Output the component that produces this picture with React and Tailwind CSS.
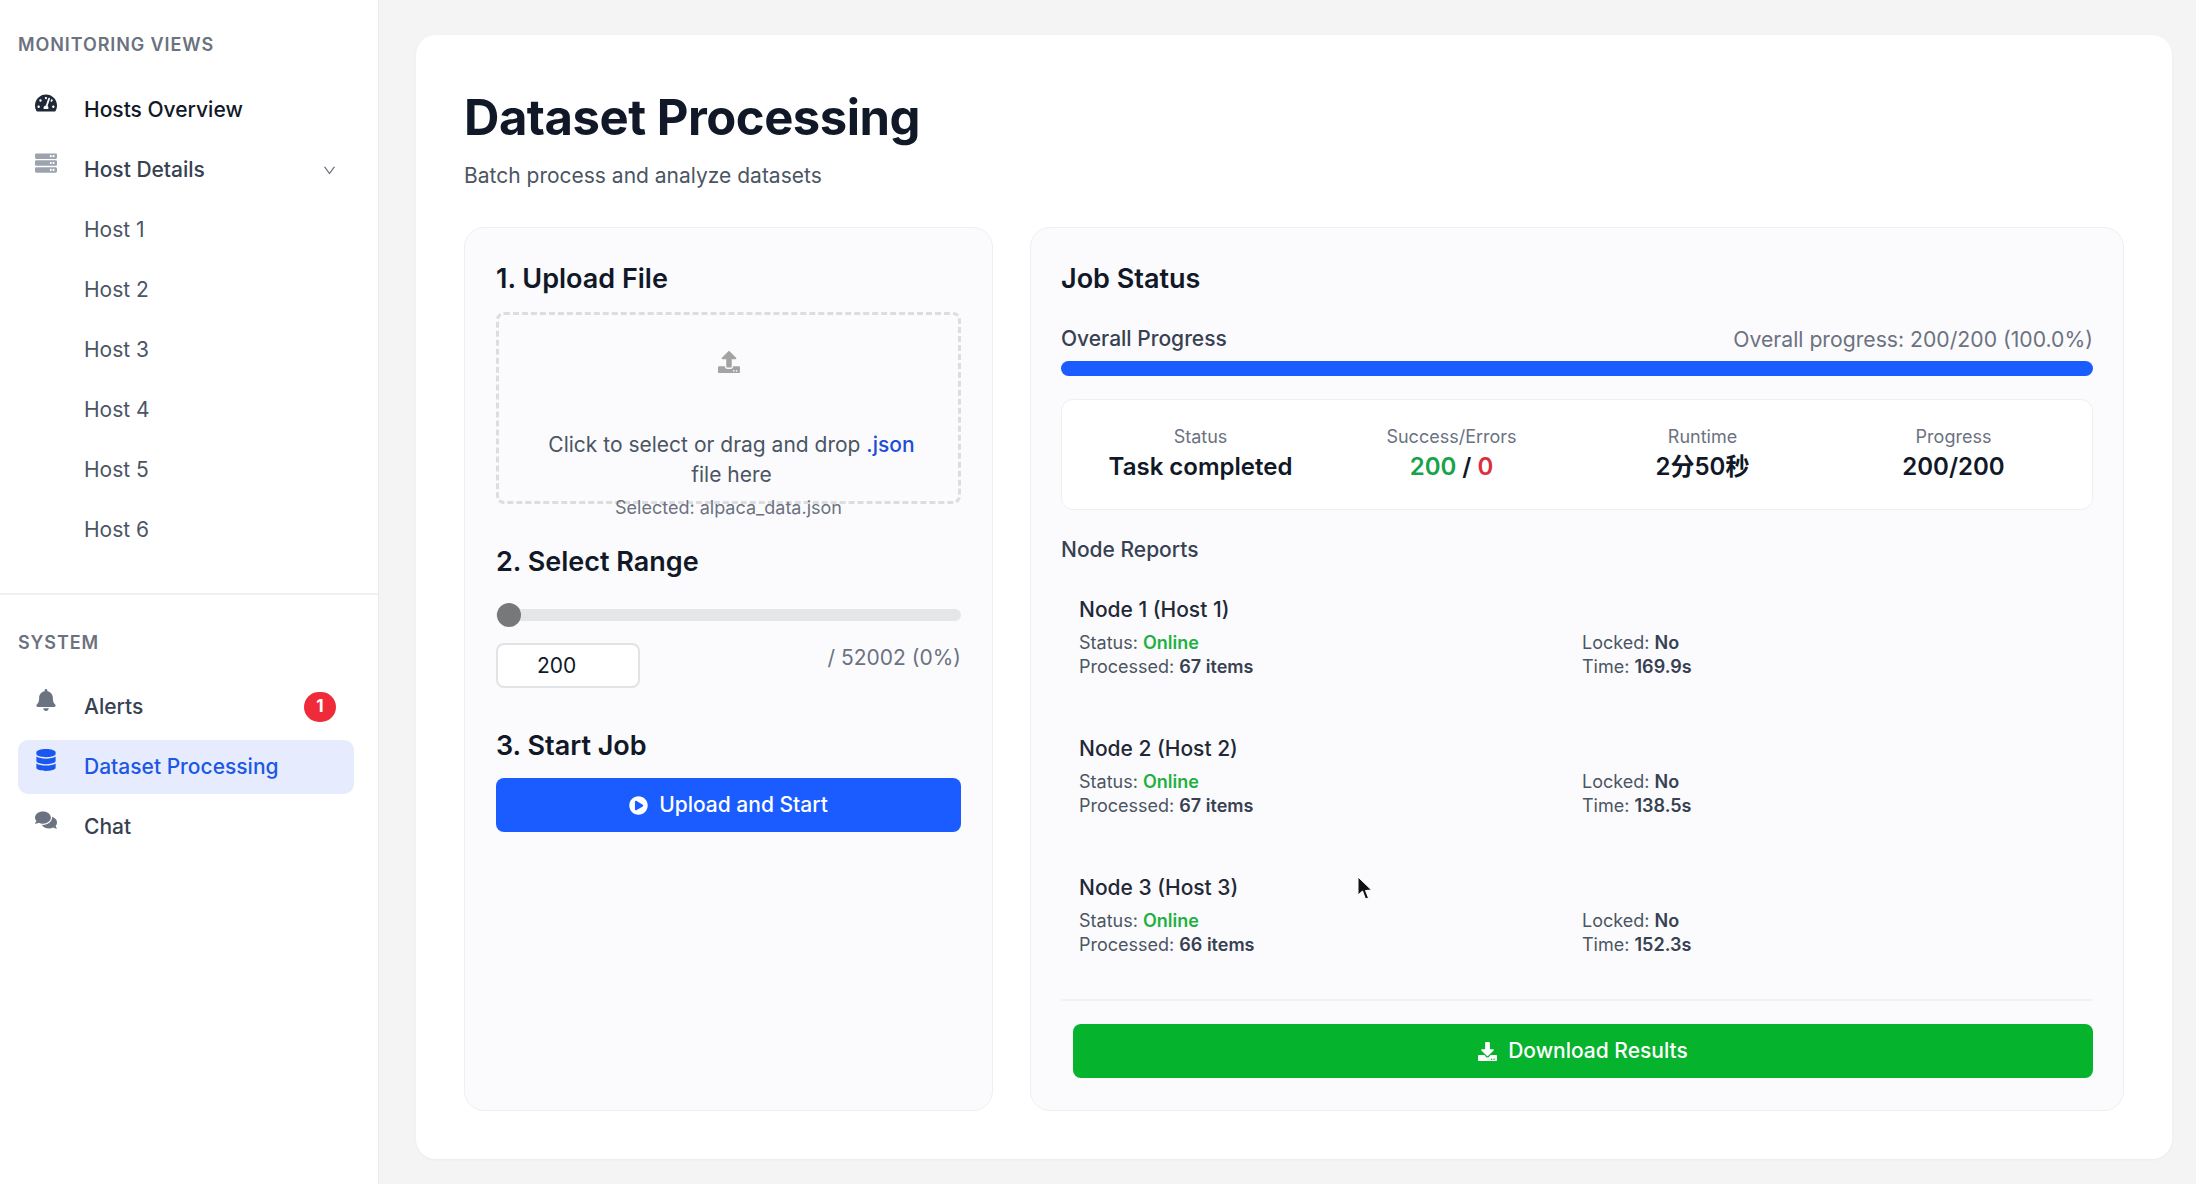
import React from "react";
import { FaTachometerAlt, FaServer, FaBell, FaDatabase, FaComments, FaUpload, FaPlayCircle, FaDownload } from "react-icons/fa";
import { AiOutlineDown } from "react-icons/ai";

function NavItem({ icon: Icon, label, text = "text-[#374151]", iconColor = "text-[#6b7280]", active, right, sub }) {
  return (
    <div className={`h-[54px] mb-[6px] rounded-[10px] flex items-center pl-[17px] pr-[18px] ${active ? "bg-[#e6ecfd]" : ""}`}>
      <div className="w-[49px] shrink-0 h-full relative">
        {Icon && <Icon className={`absolute left-0 top-[9px] w-[22px] h-[22px] ${iconColor}`} />}
      </div>
      <span className={`text-[21px] font-medium whitespace-nowrap ${text} ${sub ? "font-normal" : ""}`}>{label}</span>
      {right && <div className="ml-auto">{right}</div>}
    </div>
  );
}

function Stat({ label, children }) {
  return (
    <div className="flex flex-col items-center -mt-[1px]">
      <div className="text-[18px] leading-[26px] text-[#6b7280]">{label}</div>
      <div className="text-[24px] leading-[34px] font-semibold text-[#111827]">{children}</div>
    </div>
  );
}

function Node({ name, processed, time }) {
  return (
    <div className="h-[139px] pl-[18px] pt-[13px]">
      <div className="text-[21px] leading-[32px] font-medium text-[#1f2937]">{name}</div>
      <div className="grid grid-cols-2 mt-[5px] text-[18px] leading-[24px] text-[#4b5563]">
        <div>
          <div>Status: <span className="font-semibold text-[#1eb141]">Online</span></div>
          <div>Processed: <span className="font-semibold text-[#374151]">{processed} items</span></div>
        </div>
        <div className="-ml-[4px]">
          <div>Locked: <span className="font-semibold text-[#374151]">No</span></div>
          <div>Time: <span className="font-semibold text-[#374151]">{time}</span></div>
        </div>
      </div>
    </div>
  );
}

export default function App() {
  return (
    <div className="w-[2196px] h-[1184px] overflow-hidden flex bg-[#f4f4f5] text-[#111827]" style={{ fontFamily: "Inter, 'Noto Sans CJK SC', sans-serif" }}>
      <aside className="w-[379px] shrink-0 h-full bg-white border-r border-[#e9eaec] flex flex-col">
        <div className="h-[595px] border-b-2 border-[#f0f1f3] pl-[18px] pr-[24px] pt-[34px]">
          <div className="text-[18px] leading-[22px] font-semibold tracking-[0.05em] text-[#6b7280] mb-[27px]">MONITORING VIEWS</div>
          <NavItem icon={FaTachometerAlt} label="Hosts Overview" text="text-[#111827]" iconColor="text-[#1f2937]" />
          <NavItem icon={FaServer} label="Host Details" iconColor="text-[#9ca3af]" right={<AiOutlineDown className="w-[15px] h-[15px] text-[#6b7280] -mr-[1px]" />} />
          {["Host 1", "Host 2", "Host 3", "Host 4", "Host 5", "Host 6"].map((h) => (
            <NavItem key={h} label={h} text="text-[#4b5563]" sub />
          ))}
        </div>
        <div className="pl-[18px] pr-[24px] pt-[37px]">
          <div className="text-[18px] leading-[22px] font-semibold tracking-[0.05em] text-[#6b7280] mb-[26px]">SYSTEM</div>
          <NavItem icon={FaBell} label="Alerts" right={
            <div className="w-[32px] h-[30px] rounded-full bg-[#ef2b3a] text-white text-[17px] font-bold flex items-center justify-center">1</div>
          } />
          <NavItem icon={FaDatabase} label="Dataset Processing" text="text-[#1d57e6]" iconColor="text-[#1a56f0]" active />
          <NavItem icon={FaComments} label="Chat" />
        </div>
      </aside>

      <main className="flex-1 min-w-0 pl-[37px] pr-[24px] pt-[35px] pb-[25px]">
        <div className="h-full bg-white rounded-[20px] shadow-[0_1px_3px_rgba(0,0,0,0.04)] px-[48px] pt-[54px] pb-[48px] flex flex-col">
          <h1 className="text-[49px] leading-[58px] font-bold text-[#111827] tracking-[-0.01em]">Dataset Processing</h1>
          <p className="text-[21px] leading-[32px] text-[#4b5563] mt-[13px] mb-[35px]">Batch process and analyze datasets</p>
          <div className="flex-1 min-h-0 flex gap-[37px]">
            <section className="w-[529px] shrink-0 bg-[#fbfbfd] border border-[#eeeff1] rounded-[20px] px-[31px] pt-[33px]">
              <h2 className="text-[27px] leading-[36px] font-semibold text-[#111827]">1. Upload File</h2>
              <div className="mt-[15px] h-[192px] border-[3px] border-dashed border-[#dcdde0] rounded-[8px] flex flex-col items-center pl-[35px] pr-[29px] pt-[36px]">
                <FaUpload className="w-[22px] h-[22px] text-[#a3a3a3] -ml-[6px]" />
                <div className="mt-[57px] text-center text-[21px] leading-[30px] text-[#4b5563]">
                  Click to select or drag and drop <span className="text-[#1d4ed8] font-medium">.json</span><br />file here
                </div>
              </div>
              <div className="text-center text-[18px] leading-[24px] text-[#6b7280] -mt-[8px]">Selected: alpaca_data.json</div>
              <h2 className="text-[27px] leading-[36px] font-semibold text-[#111827] mt-[24px]">2. Select Range</h2>
              <div className="relative h-[12px] rounded-full bg-[#e5e6e8] mt-[29px]">
                <div className="absolute left-[1px] top-[-6px] w-[24px] h-[24px] rounded-full bg-[#777879]" />
              </div>
              <div className="flex justify-between mt-[22px]">
                <div className="w-[144px] h-[45px] bg-white border-2 border-[#e2e3e5] rounded-[8px] flex items-center pl-[39px] text-[21px] text-[#111827]">200</div>
                <div className="text-[21px] leading-[28px] text-[#6b7280] mt-[1px]">/ 52002 (0%)</div>
              </div>
              <h2 className="text-[27px] leading-[36px] font-semibold text-[#111827] mt-[40px]">3. Start Job</h2>
              <button className="mt-[14px] w-full h-[54px] rounded-[8px] bg-[#1a5cff] text-white text-[21px] font-medium flex items-center justify-center gap-[11px]">
                <FaPlayCircle className="w-[19px] h-[19px]" />Upload and Start
              </button>
            </section>

            <section className="flex-1 min-w-0 bg-[#fbfbfd] border border-[#eeeff1] rounded-[20px] px-[30px] pt-[33px] flex flex-col">
              <h2 className="text-[27px] leading-[36px] font-semibold text-[#111827]">Job Status</h2>
              <div className="flex justify-between text-[21px] leading-[30px] mt-[27px]">
                <span className="font-medium text-[#374151]">Overall Progress</span>
                <span className="text-[#6b7280] text-[21.2px]">Overall progress: 200/200 (100.0%)</span>
              </div>
              <div className="h-[15px] rounded-full bg-[#1a5cff] mt-[7px]" />
              <div className="mt-[23px] h-[111px] bg-white border border-[#eeeff1] rounded-[12px] grid grid-cols-4 px-[13px] items-center">
                <Stat label="Status">Task completed</Stat>
                <Stat label="Success/Errors"><span className="text-[#16a34a]">200</span> / <span className="text-[#dc2f3c]">0</span></Stat>
                <Stat label="Runtime">2分50秒</Stat>
                <Stat label="Progress">200/200</Stat>
              </div>
              <div className="text-[21px] leading-[30px] font-medium text-[#374151] mt-[25px]">Node Reports</div>
              <div className="mt-[16px]">
                <Node name="Node 1 (Host 1)" processed={67} time="169.9s" />
                <Node name="Node 2 (Host 2)" processed={67} time="138.5s" />
                <Node name="Node 3 (Host 3)" processed={66} time="152.3s" />
              </div>
              <div className="border-t-2 border-[#f0f1f3] mt-[1px] pt-[23px] pl-[12px]">
                <button className="w-full h-[54px] rounded-[8px] bg-[#05b32d] text-white text-[21px] font-medium flex items-center justify-center gap-[11px]">
                  <FaDownload className="w-[19px] h-[19px]" />Download Results
                </button>
              </div>
            </section>
          </div>
        </div>
      </main>
      <svg className="absolute left-[1356px] top-[875px] w-[18px] h-[28px]" viewBox="0 0 18 28">
        <path d="M2 2 L2 20 L6.5 16 L9.5 24 L12.5 23 L9.5 15.5 L15.5 15 Z" fill="#111" stroke="#fff" strokeWidth="1" />
      </svg>
    </div>
  );
}
